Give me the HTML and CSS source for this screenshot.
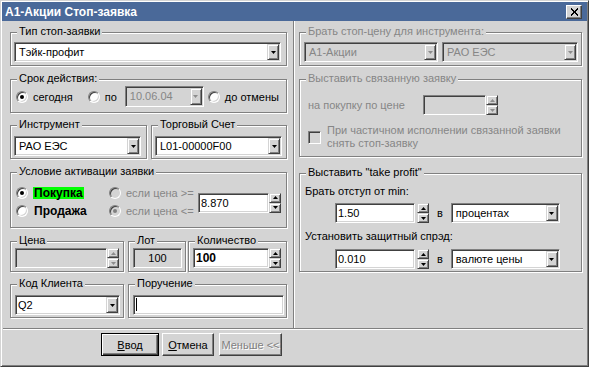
FILE: index.html
```html
<!DOCTYPE html>
<html lang="ru">
<head>
    <meta charset="UTF-8">
    <title>A1-Акции Стоп-заявка</title>
    <link rel="stylesheet" href="styles.css">
</head>
<body>
<div class="window">
    <div class="titlebar">
        <span class="title">A1-Акции Стоп-заявка</span>
        <span class="close"><svg width="9" height="8" viewBox="0 0 9 8"><path d="M1 0.5L8 7.5M8 0.5L1 7.5" stroke="#000" stroke-width="1.8" shape-rendering="crispEdges"/></svg></span>
    </div>
    <div class="main">
        <!-- левая часть -->
        <div class="left">
            <div class="group g-type">
                <span class="legend">Тип стоп-заявки</span>
                <div class="select sel-type"><span class="val">Тэйк-профит</span><span class="drop"><svg width="5" height="3" viewBox="0 0 5 3"><path d="M0 0h5L2.5 3z"/></svg></span></div>
            </div>
            <div class="group g-term">
                <span class="legend">Срок действия:</span>
                <label class="opt"><i class="radio on"></i>сегодня</label>
                <label class="opt opt-po"><i class="radio"></i>по</label>
                <div class="select sel-date off"><span class="val">10.06.04</span><span class="drop"><svg width="5" height="3" viewBox="0 0 5 3"><path d="M0 0h5L2.5 3z"/></svg></span></div>
                <label class="opt opt-cancel"><i class="radio"></i>до отмены</label>
            </div>
            <div class="row r-instr">
                <div class="group g-instr">
                    <span class="legend">Инструмент</span>
                    <div class="select sel-instr"><span class="val">РАО ЕЭС</span><span class="drop"><svg width="5" height="3" viewBox="0 0 5 3"><path d="M0 0h5L2.5 3z"/></svg></span></div>
                </div>
                <div class="group g-acc">
                    <span class="legend">Торговый Счет</span>
                    <div class="select sel-instr"><span class="val">L01-00000F00</span><span class="drop"><svg width="5" height="3" viewBox="0 0 5 3"><path d="M0 0h5L2.5 3z"/></svg></span></div>
                </div>
            </div>
            <div class="group g-cond">
                <span class="legend">Условие активации заявки</span>
                <div class="col c-side">
                    <label class="opt"><i class="radio on"></i><span class="side buy">Покупка</span></label>
                    <label class="opt"><i class="radio"></i><span class="side">Продажа</span></label>
                </div>
                <div class="col c-if">
                    <label class="opt off"><i class="radio"></i>если цена &gt;=</label>
                    <label class="opt off"><i class="radio on"></i>если цена &lt;=</label>
                </div>
                <div class="c-price">
                    <div class="field f-cond">8.870</div>
                    <div class="spin"><b><svg width="5" height="3" viewBox="0 0 5 3"><path d="M0 3h5L2.5 0z"/></svg></b><b><svg width="5" height="3" viewBox="0 0 5 3"><path d="M0 0h5L2.5 3z"/></svg></b></div>
                </div>
            </div>
            <div class="row r-qty">
                <div class="group g-price">
                    <span class="legend">Цена</span>
                    <div class="field f-price off"></div>
                    <div class="spin off"><b><svg width="5" height="3" viewBox="0 0 5 3"><path d="M0 3h5L2.5 0z"/></svg></b><b><svg width="5" height="3" viewBox="0 0 5 3"><path d="M0 0h5L2.5 3z"/></svg></b></div>
                </div>
                <div class="group g-lot">
                    <span class="legend">Лот</span>
                    <div class="field f-lot off">100</div>
                </div>
                <div class="group g-qty">
                    <span class="legend">Количество</span>
                    <div class="field f-qty">100</div>
                    <div class="spin"><b><svg width="5" height="3" viewBox="0 0 5 3"><path d="M0 3h5L2.5 0z"/></svg></b><b><svg width="5" height="3" viewBox="0 0 5 3"><path d="M0 0h5L2.5 3z"/></svg></b></div>
                </div>
            </div>
            <div class="row r-client">
                <div class="group g-client">
                    <span class="legend">Код Клиента</span>
                    <div class="select sel-client"><span class="val">Q2</span><span class="drop"><svg width="5" height="3" viewBox="0 0 5 3"><path d="M0 0h5L2.5 3z"/></svg></span></div>
                </div>
                <div class="group g-order">
                    <span class="legend">Поручение</span>
                    <div class="field f-order"><span class="caret"></span></div>
                </div>
            </div>
        </div>
        <!-- правая часть -->
        <div class="right">
            <div class="group g-src off">
                <span class="legend">Брать стоп-цену для инструмента:</span>
                <div class="select sel-class off"><span class="val">A1-Акции</span><span class="drop"><svg width="5" height="3" viewBox="0 0 5 3"><path d="M0 0h5L2.5 3z"/></svg></span></div>
                <div class="select sel-sec off"><span class="val">РАО ЕЭС</span><span class="drop"><svg width="5" height="3" viewBox="0 0 5 3"><path d="M0 0h5L2.5 3z"/></svg></span></div>
            </div>
            <div class="group g-link off">
                <span class="legend">Выставить связанную заявку</span>
                <div class="line">
                    <span class="lbl-link">на покупку по цене</span>
                    <div class="field f-link off"></div>
                    <div class="spin off"><b><svg width="5" height="3" viewBox="0 0 5 3"><path d="M0 3h5L2.5 0z"/></svg></b><b><svg width="5" height="3" viewBox="0 0 5 3"><path d="M0 0h5L2.5 3z"/></svg></b></div>
                </div>
                <div class="line l-check">
                    <i class="check"></i>
                    <span class="check-text">При частичном исполнении связанной заявки<br>снять стоп-заявку</span>
                </div>
            </div>
            <div class="group g-tp">
                <span class="legend">Выставить "take profit"</span>
                <div class="lbl">Брать отступ от min:</div>
                <div class="line l-tp">
                    <div class="field f-tp">1.50</div>
                    <div class="spin"><b><svg width="5" height="3" viewBox="0 0 5 3"><path d="M0 3h5L2.5 0z"/></svg></b><b><svg width="5" height="3" viewBox="0 0 5 3"><path d="M0 0h5L2.5 3z"/></svg></b></div>
                    <span class="in">в</span>
                    <div class="select sel-unit"><span class="val">процентах</span><span class="drop"><svg width="5" height="3" viewBox="0 0 5 3"><path d="M0 0h5L2.5 3z"/></svg></span></div>
                </div>
                <div class="lbl lbl-2">Установить защитный спрэд:</div>
                <div class="line l-tp l-tp2">
                    <div class="field f-tp">0.010</div>
                    <div class="spin"><b><svg width="5" height="3" viewBox="0 0 5 3"><path d="M0 3h5L2.5 0z"/></svg></b><b><svg width="5" height="3" viewBox="0 0 5 3"><path d="M0 0h5L2.5 3z"/></svg></b></div>
                    <span class="in">в</span>
                    <div class="select sel-unit"><span class="val">валюте цены</span><span class="drop"><svg width="5" height="3" viewBox="0 0 5 3"><path d="M0 0h5L2.5 3z"/></svg></span></div>
                </div>
            </div>
        </div>
    </div>
    <div class="footer">
        <span class="btn def b-ok"><u>В</u>вод</span>
        <span class="btn b-cancel"><u>О</u>тмена</span>
        <span class="btn off b-less">Меньше &lt;&lt;</span>
    </div>
</div>
</body>
</html>
```

FILE: styles.css
```css
* {
    margin: 0;
    padding: 0;
    box-sizing: border-box;
}
body {
    background: #d4d4d4;
    font-family: "Liberation Sans", Arial, sans-serif;
    font-size: 11px;
    color: #000;
}
.window {
    width: 589px;
    height: 367px;
    padding: 1px;
    background: #d4d4d4;
    border: 1px solid;
    border-color: #d4d4d4 #404040 #404040 #d4d4d4;
    box-shadow: inset 1px 1px 0 #fff, inset -1px -1px 0 #808080;
}

/* заголовок */
.titlebar {
    height: 19px;
    background: #4a6999;
    display: flex;
    align-items: center;
    justify-content: space-between;
    padding: 0 5px 0 3px;
}
.title {
    color: #fff;
    font-weight: bold;
    font-size: 12px;
}
.close {
    width: 16px;
    height: 14px;
    background: #d4d4d4;
    border: 1px solid;
    border-color: #fff #404040 #404040 #fff;
    box-shadow: inset -1px -1px 0 #808080;
    display: flex;
    align-items: center;
    justify-content: center;
}

.main {
    display: flex;
    height: 308px;
    margin: 0 4px 0 1px;
    border-bottom: 1px solid #808080;
    box-shadow: 0 1px 0 #fff;
}
.left {
    width: 291px;
    padding: 11px 0 0 7px;
    border-right: 1px solid #808080;
    box-shadow: 1px 0 0 #fff;
}
.right {
    flex: 1;
    padding: 11px 0 0 5px;
}
.row {
    display: flex;
}

/* рамки групп */
.group {
    position: relative;
    border: 1px solid #808080;
    box-shadow: inset 1px 1px 0 #fff, 1px 1px 0 #fff;
}
.legend {
    position: absolute;
    top: -8px;
    left: 6px;
    padding: 0 2px;
    line-height: 13px;
    background: #d4d4d4;
    white-space: nowrap;
}
.off,
.off .legend {
    color: #868686;
}

/* поля ввода */
.select,
.field {
    height: 20px;
    background: #fff;
    border: 1px solid;
    border-color: #808080 #fff #fff #808080;
    box-shadow: inset 1px 1px 0 #404040, inset -1px -1px 0 #d4d4d4;
}
.select {
    display: flex;
    align-items: stretch;
    padding: 1px;
}
.select .val {
    flex: 1;
    padding-left: 3px;
    padding-top: 1px;
    line-height: 15px;
    white-space: nowrap;
    overflow: hidden;
}
.select.off,
.field.off {
    background: #d4d4d4;
}
.drop,
.spin b {
    width: 12px;
    background: #d4d4d4;
    border: 1px solid;
    border-color: #d4d4d4 #404040 #404040 #d4d4d4;
    box-shadow: inset 1px 1px 0 #fff, inset -1px -1px 0 #808080;
    display: flex;
    align-items: center;
    justify-content: center;
}
.drop svg,
.spin svg {
    fill: #000;
}
.off .drop svg,
.spin.off svg {
    fill: #8c8c8c;
}
.field {
    padding: 1px 0 0 2px;
    line-height: 16px;
}
.spin {
    width: 12px;
    height: 20px;
    display: flex;
    flex-direction: column;
}
.spin b {
    flex: 1;
}

/* переключатели */
.opt {
    display: flex;
    align-items: center;
    height: 21px;
    white-space: nowrap;
}
.radio {
    position: relative;
    width: 12px;
    height: 12px;
    margin-right: 5px;
    border-radius: 50%;
    background: #fff;
    border: 1px solid;
    border-color: #808080 #fff #fff #808080;
    box-shadow: inset 1px 1px 0 #404040, inset -1px -1px 0 #d4d4d4;
}
.radio.on::after {
    content: "";
    position: absolute;
    left: 3px;
    top: 3px;
    width: 4px;
    height: 4px;
    border-radius: 50%;
    background: #000;
}
.opt.off .radio {
    background: #d4d4d4;
}
.opt.off .radio.on::after {
    background: #808080;
}
.check {
    width: 13px;
    height: 13px;
    background: #d4d4d4;
    border: 1px solid;
    border-color: #808080 #fff #fff #808080;
    box-shadow: inset 1px 1px 0 #404040, inset -1px -1px 0 #d4d4d4;
}

/* левые группы */
.g-type {
    width: 277px;
    height: 34px;
    padding: 9px 0 0 3px;
}
.sel-type {
    width: 267px;
}
.g-term {
    width: 277px;
    height: 34px;
    margin-top: 13px;
    padding: 6px 0 0 5px;
    display: flex;
}
.opt-po {
    margin-left: 15px;
}
.sel-date {
    width: 79px;
    height: 21px;
    margin-left: 8px;
}
.opt-cancel {
    margin-left: 4px;
}
.r-instr {
    margin-top: 12px;
}
.g-instr,
.g-acc {
    height: 34px;
    padding: 10px 0 0 3px;
}
.g-instr {
    width: 137px;
}
.g-acc {
    width: 136px;
    margin-left: 4px;
}
.sel-instr {
    width: 127px;
}
.g-cond {
    width: 277px;
    height: 56px;
    margin-top: 13px;
    padding: 11px 0 0 5px;
    display: flex;
}
.col {
    display: flex;
    flex-direction: column;
}
.col .opt {
    height: 18px;
}
.c-side {
    width: 93px;
}
.c-if {
    width: 89px;
}
.side {
    font-weight: bold;
    font-size: 12px;
    line-height: 12px;
    padding: 0 1px;
}
.buy {
    background: #00ff00;
}
.c-price {
    display: flex;
    align-items: center;
    height: 37px;
}
.f-cond {
    width: 71px;
}
.r-qty {
    margin-top: 13px;
}
.r-qty .group {
    height: 31px;
    padding: 6px 0 0 4px;
    display: flex;
}
.g-price {
    width: 114px;
}
.f-price {
    width: 92px;
}
.g-lot {
    width: 58px;
    margin-left: 4px;
}
.f-lot {
    width: 49px;
    text-align: center;
    padding-left: 0;
    color: #000;
}
.g-qty {
    width: 99px;
    margin-left: 2px;
}
.f-qty {
    width: 76px;
    font-weight: bold;
    font-size: 12px;
}
.r-client {
    margin-top: 12px;
}
.r-client .group {
    height: 34px;
    padding: 10px 0 0 4px;
}
.g-client {
    width: 114px;
}
.sel-client {
    width: 105px;
}
.sel-client .val {
    padding-left: 1px;
}
.g-order {
    width: 159px;
    margin-left: 4px;
}
.f-order {
    width: 151px;
}
.caret {
    display: inline-block;
    width: 1px;
    height: 13px;
    margin-top: 1px;
    background: #000;
    vertical-align: top;
}

/* правые группы */
.g-src {
    width: 283px;
    height: 34px;
    padding: 9px 0 0 4px;
    display: flex;
}
.sel-class {
    width: 134px;
}
.sel-sec {
    width: 136px;
    margin-left: 4px;
}
.line {
    display: flex;
    align-items: center;
}
.g-link {
    width: 283px;
    height: 78px;
    margin-top: 13px;
    padding: 15px 0 0 8px;
}
.lbl-link {
    width: 115px;
}
.f-link {
    width: 63px;
}
.l-check {
    margin-top: 9px;
}
.check-text {
    margin-left: 6px;
    line-height: 13px;
}
.g-tp {
    width: 283px;
    height: 99px;
    margin-top: 16px;
    padding: 11px 0 0 5px;
}
.lbl {
    line-height: 13px;
}
.lbl-2 {
    margin-top: 7px;
}
.l-tp {
    margin: 5px 0 0 30px;
}
.l-tp2 {
    margin-top: 6px;
}
.f-tp {
    width: 80px;
}
.l-tp .spin {
    margin-left: 2px;
}
.in {
    margin-left: 8px;
}
.sel-unit {
    width: 109px;
    margin-left: 8px;
}

/* кнопки */
.footer {
    display: flex;
    padding: 4px 0 0 99px;
}
.btn {
    height: 23px;
    background: #d4d4d4;
    border: 1px solid;
    border-color: #fff #404040 #404040 #fff;
    box-shadow: inset -1px -1px 0 #808080;
    display: flex;
    align-items: center;
    justify-content: center;
}
.btn.def {
    border-color: #000;
    box-shadow: inset 1px 1px 0 #fff, inset -1px -1px 0 #404040, inset -2px -2px 0 #808080;
}
.btn.off {
    color: #808080;
    text-shadow: 1px 1px 0 #fff;
}
.b-ok {
    width: 58px;
}
.b-cancel {
    width: 52px;
    margin-left: 3px;
}
.b-less {
    width: 63px;
    margin-left: 5px;
}
```
